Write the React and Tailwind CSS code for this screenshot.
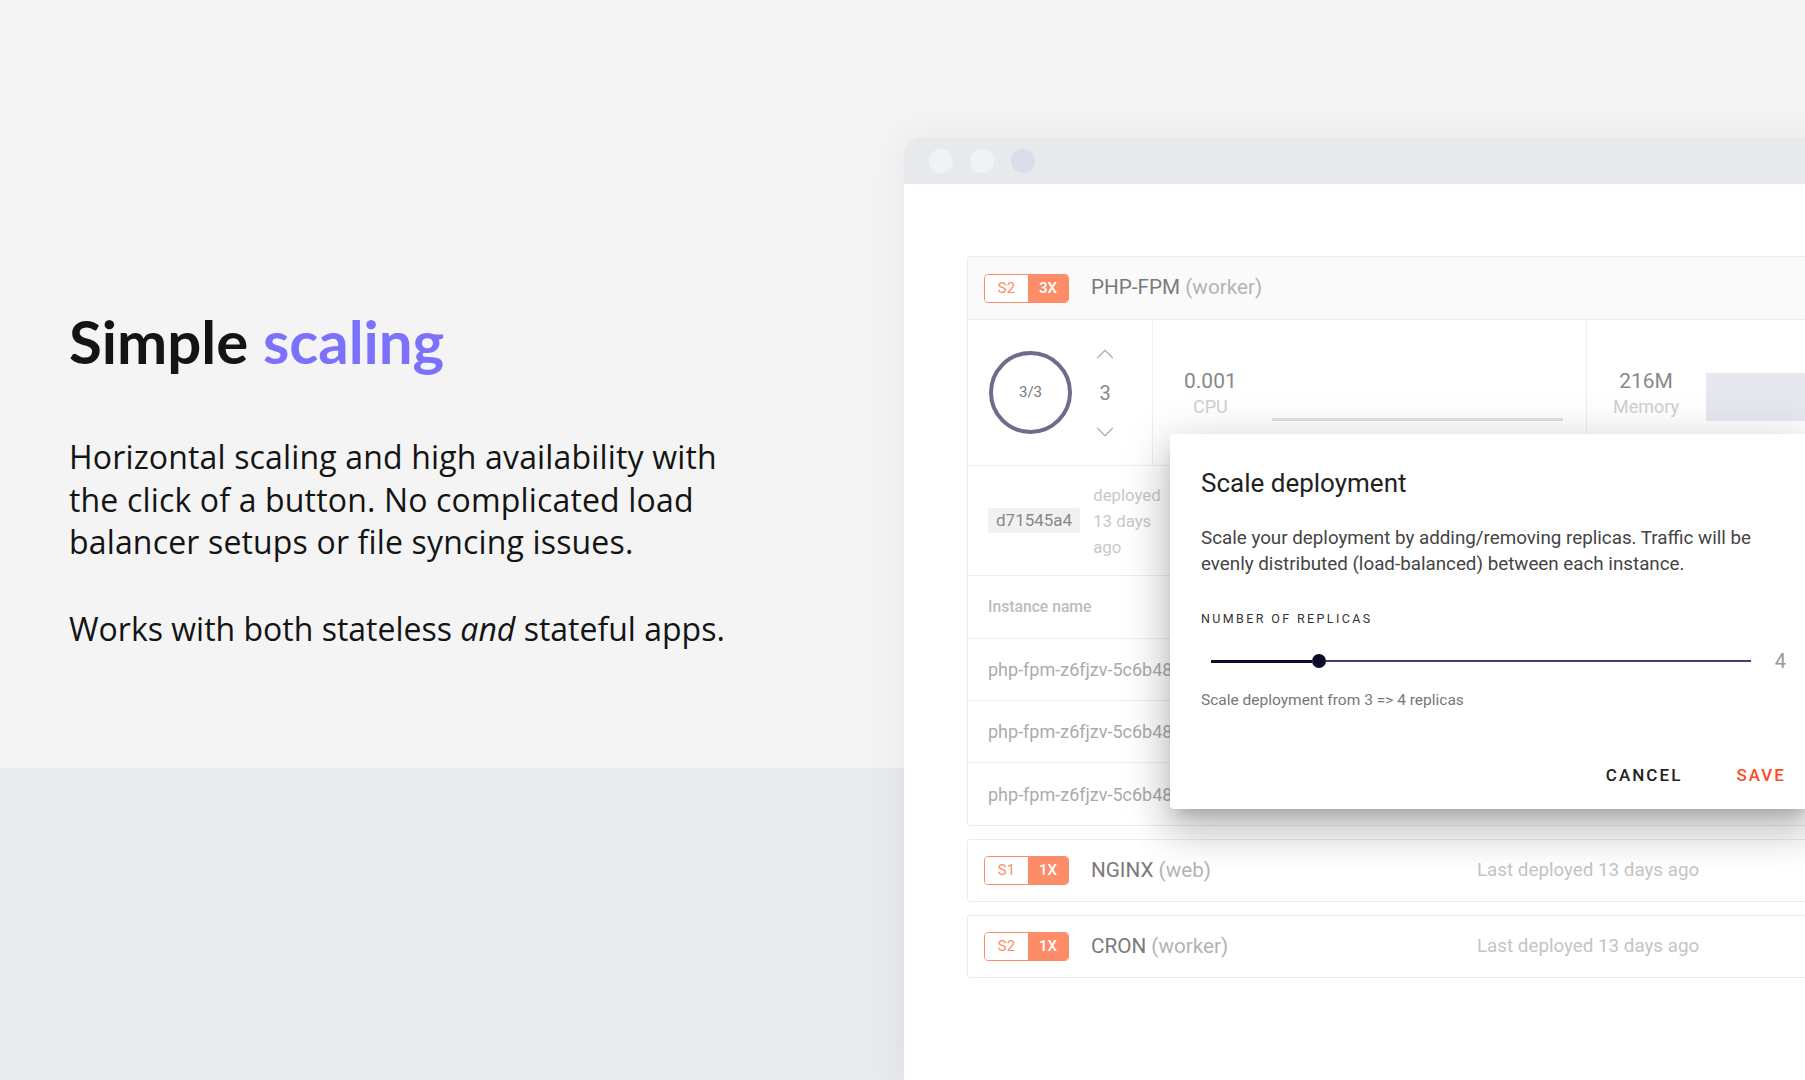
import { ChevronUp, ChevronDown } from 'lucide-react';

const ui = { fontFamily: "Roboto, 'Liberation Sans', sans-serif" };
const heading = { fontFamily: "Lato, 'Open Sans', sans-serif" };
const body = { fontFamily: "'Open Sans', Lato, sans-serif" };

function Badge({ size, count }) {
  return (
    <div className="flex h-[29px] shrink-0 overflow-hidden rounded-[4px] border border-[#fd8c68] text-[15px]">
      <div className="flex w-[43px] items-center justify-center bg-white text-[#fd8c68]">{size}</div>
      <div className="flex w-[40px] items-center justify-center bg-[#fd8c68] font-medium text-white">{count}</div>
    </div>
  );
}

function ServiceCard({ size, count, name, kind }) {
  return (
    <div className="mt-[13px] flex h-[63px] items-center rounded-[3px] border border-[#ececec] bg-white pl-[16px]">
      <Badge size={size} count={count} />
      <div className="ml-[22px] w-[386px] shrink-0 text-[20.7px] text-[#7a7a7a]">
        {name} <span className="text-[#b3b3b3]">({kind})</span>
      </div>
      <div className="whitespace-nowrap text-[18.8px] text-[#c4c4c4]">Last deployed 13 days ago</div>
    </div>
  );
}

function InstanceRow({ last }) {
  return (
    <div className={`flex h-[62px] items-center pl-[20px] ${last ? '' : 'border-b border-[#eeeeee]'}`}>
      <span className="whitespace-nowrap text-[18px] text-[#ababab]">php-fpm-z6fjzv-5c6b48f7d-x2k9p</span>
    </div>
  );
}

function ScaleDialog() {
  return (
    <div
      className="absolute left-[266px] top-[296px] h-[375px] w-[640px] rounded-[4px] bg-white pl-[31px] pr-[24px] pt-[34px] shadow-[0_11px_15px_-7px_rgba(0,0,0,0.2),0_24px_38px_3px_rgba(0,0,0,0.14),0_9px_46px_8px_rgba(0,0,0,0.12)]"
      style={ui}
    >
      <h2 className="text-[26px] font-normal leading-[30px] text-[#222]">Scale deployment</h2>
      <p className="mt-[27px] whitespace-nowrap text-[18.8px] leading-[26px] text-[#444]">
        Scale your deployment by adding/removing replicas. Traffic will be
        <br />
        evenly distributed (load-balanced) between each instance.
      </p>
      <div className="mt-[34px] text-[12.5px] leading-[16px] tracking-[0.19em] text-[#333]">NUMBER OF REPLICAS</div>
      <div className="mt-[24px] flex h-[20px] items-center">
        <div className="ml-[10px] flex w-[541px] items-center">
          <div className="h-[3px] w-[101px] bg-[#0b0b2a]" />
          <div className="h-[14px] w-[14px] shrink-0 rounded-full bg-[#0b0b2a]" />
          <div className="h-[2px] flex-1 bg-[#3e3e70]" />
        </div>
        <span className="ml-[24px] text-[20px] text-[#999]">4</span>
      </div>
      <div className="mt-[20px] text-[15.5px] leading-[18px] text-[#777]">Scale deployment from 3 =&gt; 4 replicas</div>
      <div className="mt-[54px] flex justify-end gap-[54px] text-[17px] font-medium leading-[24px] tracking-[0.12em]">
        <button className="text-[#222]">CANCEL</button>
        <button className="text-[#ff4b1f]">SAVE</button>
      </div>
    </div>
  );
}

function AppWindow() {
  return (
    <div className="relative flex h-full w-[1000px] flex-col overflow-hidden rounded-tl-[16px] bg-white shadow-[0_0_40px_rgba(0,0,0,0.06)]" style={ui}>
      <div className="flex h-[46px] shrink-0 items-center gap-[17px] bg-[#e8e9ed] pl-[25px]">
        <span className="h-[24px] w-[24px] rounded-full bg-[#f1f2f7]" />
        <span className="h-[24px] w-[24px] rounded-full bg-[#f1f2f7]" />
        <span className="h-[24px] w-[24px] rounded-full bg-[#dcdde9]" />
      </div>

      <div className="pl-[63px] pt-[72px]">
        <div className="rounded-[3px] border border-[#ececec]">
          <div className="flex h-[63px] items-center border-b border-[#ececec] bg-[#fafafa] pl-[16px]">
            <Badge size="S2" count="3X" />
            <div className="ml-[22px] text-[20.7px] text-[#7a7a7a]">
              PHP-FPM <span className="text-[#b3b3b3]">(worker)</span>
            </div>
          </div>

          <div className="flex h-[146px] border-b border-[#eeeeee]">
            <div className="flex w-[184px] shrink-0 items-center pl-[21px]">
              <div className="flex h-[83px] w-[83px] shrink-0 items-center justify-center rounded-full border-[4px] border-[#6d6c8a] text-[15px] text-[#777]">
                3/3
              </div>
              <div className="ml-[17px] flex w-[32px] flex-col items-center gap-[12px]">
                <ChevronUp size={30} strokeWidth={1.1} className="text-[#b3b3b3]" />
                <span className="text-[20px] leading-[24px] text-[#888]">3</span>
                <ChevronDown size={30} strokeWidth={1.1} className="text-[#b3b3b3]" />
              </div>
            </div>

            <div className="flex w-[434px] shrink-0 items-center border-l border-[#eeeeee] pl-[31px] pr-[23px]">
              <div className="flex flex-col items-center">
                <span className="text-[21px] leading-[28px] text-[#888]">0.001</span>
                <span className="text-[18px] leading-[24px] text-[#cfcfcf]">CPU</span>
              </div>
              <div className="ml-[35px] mt-[8px] flex h-[48px] flex-1 items-end">
                <div className="h-[3px] w-full bg-[#dfdfe8]" />
              </div>
            </div>

            <div className="flex min-w-0 flex-1 items-center border-l border-[#eeeeee] pl-[26px]">
              <div className="flex flex-col items-center">
                <span className="text-[21px] leading-[28px] text-[#888]">216M</span>
                <span className="text-[18px] leading-[24px] text-[#cfcfcf]">Memory</span>
              </div>
              <div className="ml-[27px] mt-[8px] h-[48px] w-[300px] shrink-0 bg-[#e7e7ef]" />
            </div>
          </div>

          <div className="flex h-[110px] items-center border-b border-[#eeeeee] pl-[20px]">
            <span className="rounded-[2px] bg-[#f1f1f1] px-[8px] text-[17px] leading-[25px] text-[#888]">d71545a4</span>
            <div className="ml-[13px] flex flex-col text-[16.8px] leading-[26px] text-[#c8c8c8]">
              <span>deployed</span>
              <span>13 days</span>
              <span>ago</span>
            </div>
          </div>

          <div className="flex h-[63px] items-center border-b border-[#eeeeee] pl-[20px]">
            <span className="text-[15.7px] font-medium text-[#bcbcbc]">Instance name</span>
          </div>

          <InstanceRow />
          <InstanceRow />
          <InstanceRow last />
        </div>

        <ServiceCard size="S1" count="1X" name="NGINX" kind="web" />
        <ServiceCard size="S2" count="1X" name="CRON" kind="worker" />
      </div>

      <ScaleDialog />
    </div>
  );
}

export default function App() {
  return (
    <div className="flex h-[1080px] w-[1805px] overflow-hidden bg-[#f4f4f4]">
      <div className="flex w-[904px] shrink-0 flex-col">
        <div className="h-[768px] pl-[69px] pt-[305px] text-[#141414]">
          <h1 className="text-[60px] font-bold leading-[72px]" style={heading}>
            Simple <span className="text-[#7b71fb]">scaling</span>
          </h1>
          <div style={body}>
            <p className="mt-[59px] whitespace-nowrap text-[32px] tracking-[0.005em] leading-[42.5px]">
              Horizontal scaling and high availability with
              <br />
              the click of a button. No complicated load
              <br />
              balancer setups or file syncing issues.
            </p>
            <p className="mt-[44px] whitespace-nowrap text-[32px] leading-[42.5px]">
              Works with both stateless <em>and</em> stateful apps.
            </p>
          </div>
        </div>
        <div className="flex-1 bg-[#e9eaed]" />
      </div>

      <div className="min-w-0 flex-1 pt-[138px]">
        <AppWindow />
      </div>
    </div>
  );
}
